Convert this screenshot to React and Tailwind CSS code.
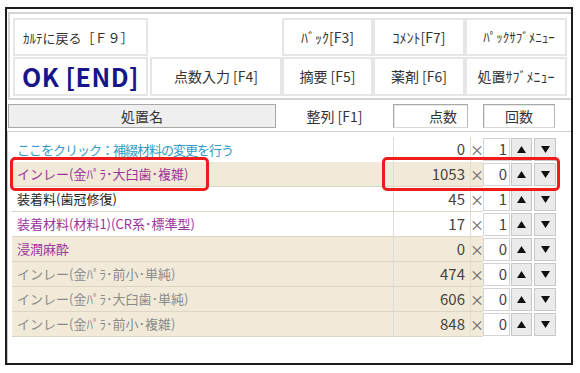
import React from "react";

const rows = [
  { name: "ここをクリック：補綴材料の変更を行う", color: "text-[#2f9bc6] tracking-[-1px]", bg: "", num: "0", cnt: "1" },
  { name: "インレー(金ﾊﾟﾗ･大臼歯･複雑)", color: "text-[#9c339a]", bg: "bg-[#f2ead8]", num: "1053", cnt: "0" },
  { name: "装着料(歯冠修復)", color: "text-[#222222]", bg: "bg-white", num: "45", cnt: "1" },
  { name: "装着材料(材料1)(CR系･標準型)", color: "text-[#9c339a]", bg: "bg-white", num: "17", cnt: "1" },
  { name: "浸潤麻酔", color: "text-[#a033a0]", bg: "bg-[#f2ead8]", num: "0", cnt: "0" },
  { name: "インレー(金ﾊﾟﾗ･前小･単純)", color: "text-[#8a8a8a]", bg: "bg-[#f2ead8]", num: "474", cnt: "0" },
  { name: "インレー(金ﾊﾟﾗ･大臼歯･単純)", color: "text-[#8a8a8a]", bg: "bg-[#f2ead8]", num: "606", cnt: "0" },
  { name: "インレー(金ﾊﾟﾗ･前小･複雑)", color: "text-[#8a8a8a]", bg: "bg-[#f2ead8]", num: "848", cnt: "0" },
];

function Btn({ children, className = "" }) {
  return (
    <div className={"border-2 border-[#e6e6e6] bg-white flex items-center " + className}>
      {children}
    </div>
  );
}

export default function App() {
  return (
    <div className="w-[580px] h-[373px] bg-white relative font-['Noto_Sans_CJK_JP',sans-serif] text-[#333333] overflow-hidden">
      <div className="ml-[5px] mt-[7px] w-[568px] h-[358px] border-2 border-[#1c1c1c] flex flex-col">
        {/* top panel */}
        <div className="ml-[1px] mt-[3px] w-[563px] h-[88px] border-2 border-r-0 border-[#d4d4d4] pl-[3px] pt-[4px]">
          <div className="grid grid-cols-[135px_134px_91px_92px_102px] grid-rows-[38px_39px] gap-y-[1px]">
            <Btn className="pl-[8px] text-[13px] leading-none">ｶﾙﾃに戻る［Ｆ９］</Btn>
            <div className="bg-white" />
            <Btn className="justify-center text-[14px]">ﾊﾞｯｸ[F3]</Btn>
            <Btn className="justify-center text-[14px]">ｺﾒﾝﾄ[F7]</Btn>
            <Btn className="justify-center text-[13px] pl-[6px]">ﾊﾟｯｸｻﾌﾞﾒﾆｭｰ</Btn>
            <Btn className="pl-[7px] text-[25px] font-bold text-[#16168a] tracking-[0.5px]">OK [END]</Btn>
            <Btn className="ml-[2px] justify-center text-[14px]">点数入力 [F4]</Btn>
            <Btn className="justify-center text-[14px]">摘要 [F5]</Btn>
            <Btn className="justify-center text-[14px]">薬剤 [F6]</Btn>
            <Btn className="justify-center text-[14px]">処置ｻﾌﾞﾒﾆｭｰ</Btn>
          </div>
        </div>

        {/* header row */}
        <div className="ml-[1px] mt-[4px] h-[24px] flex text-[14px] text-[#333333]">
          <div className="w-[268px] border border-[#a8a8a8] bg-[#efefef] flex items-center justify-center">処置名</div>
          <div className="w-[117px] flex items-center justify-center">整列 [F1]</div>
          <div className="w-[75px] border border-[#a8a8a8] border-b-[#d8d8d8] border-r-[#b8b8b8] bg-white flex items-center justify-end pr-[10px] shadow-[inset_1px_1px_0_#e8e8e8]">点数</div>
          <div className="w-[15px]" />
          <div className="w-[72px] border border-[#a8a8a8] border-b-[#d8d8d8] border-r-[#b8b8b8] bg-white flex items-center justify-center shadow-[inset_1px_1px_0_#e8e8e8]">回数</div>
        </div>

        {/* list */}
        <div className="mt-[3px] flex-1 border-t border-l border-[#cccccc] pl-[4px] pt-[5px]">
          {rows.map((r, i) => (
            <div key={i} className="flex h-[25px]">
              <div className={"w-[381px] pl-[5px] flex items-center text-[13px] whitespace-nowrap " + r.color + " " + r.bg + (i === 0 ? "" : " border-b border-[#ddd6c6]")}>
                {r.name}
              </div>
              <div className={"w-[77px] border-l border-[#dcdcdc] flex items-center justify-end pr-[5px] text-[15px] text-[#444444] " + r.bg + (i === 0 ? "" : " border-b border-b-[#ddd6c6]")}>
                {r.num}
              </div>
              <div className={"w-[13px] border-l border-[#e2ddd0] flex items-center justify-center text-[14px] text-[#666666] " + r.bg + (i === 0 ? "" : " border-b border-b-[#ddd6c6]")}>
                ×
              </div>
              <div className="w-[27px] h-[23px] mt-[1px] border border-[#d4d4d4] bg-white flex items-center justify-end pr-[2px] text-[15px] text-[#444444]">
                {r.cnt}
              </div>
              <div className="w-[21px] h-[23px] mt-[1px] ml-[1px] border border-[#c8c8c8] bg-[#ebebeb] flex items-center justify-center">
                <svg width="9" height="7" viewBox="0 0 9 7"><polygon points="4.5,0 9,7 0,7" fill="#111" /></svg>
              </div>
              <div className="w-[22px] h-[23px] mt-[1px] ml-[2px] border border-[#c8c8c8] bg-[#ebebeb] flex items-center justify-center">
                <svg width="9" height="7" viewBox="0 0 9 7"><polygon points="0,0 9,0 4.5,7" fill="#111" /></svg>
              </div>
            </div>
          ))}
        </div>
      </div>

      {/* red highlight boxes */}
      <div className="absolute left-[10px] top-[157px] w-[199px] h-[34px] border-[3px] border-[#ee1c1c] rounded-[5px]" />
      <div className="absolute left-[382px] top-[157px] w-[178px] h-[34px] border-[3px] border-[#ee1c1c] rounded-[5px]" />
    </div>
  );
}
